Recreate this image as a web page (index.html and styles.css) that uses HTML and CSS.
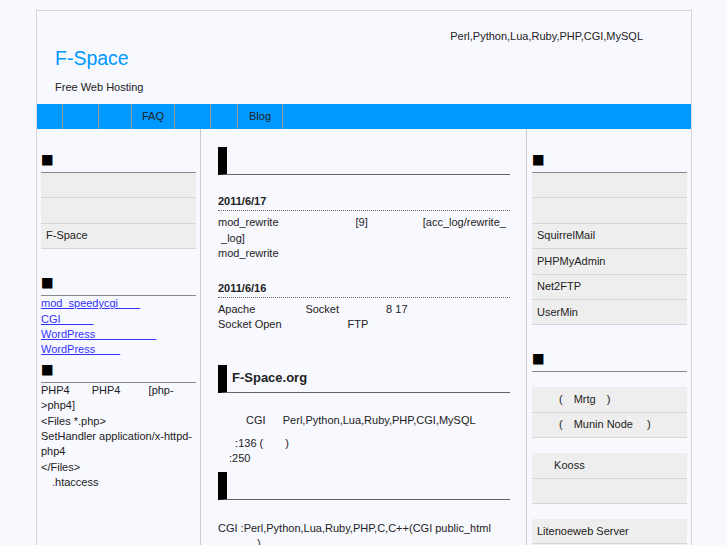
FILE: index.html
```html
<!DOCTYPE html>
<html lang="ja">
<head>
<meta charset="utf-8">
<title>F-Space</title>
<link rel="stylesheet" href="styles.css">
</head>
<body>
<div class="page">
  <header class="site-header">
    <div class="brand">
      <h1 class="site-title">F-Space</h1>
      <p class="site-desc">Free Web Hosting</p>
    </div>
    <p class="header-note">Perl,Python,Lua,Ruby,PHP,CGI,MySQL</p>
  </header>

  <ul class="global-nav">
    <li class="nav-w26"><a href="#">　</a></li>
    <li class="nav-w36"><a href="#">　</a></li>
    <li class="nav-w33"><a href="#">　</a></li>
    <li class="nav-w43"><a href="#">FAQ</a></li>
    <li class="nav-w36"><a href="#">　</a></li>
    <li class="nav-w27"><a href="#">　</a></li>
    <li class="nav-w45"><a href="#">Blog</a></li>
  </ul>

  <div class="columns">
    <aside class="sidebar sidebar-left">
      <h3 class="side-title"><span class="mark">■</span>　</h3>
      <ul class="menu">
        <li>　</li>
        <li>　</li>
        <li>F-Space</li>
      </ul>

      <h3 class="side-title"><span class="mark">■</span>　</h3>
      <div class="link-list">
        <a href="#">mod_speedycgi　　</a><br>
        <a href="#">CGI　　　</a><br>
        <a href="#">WordPress　　　　　&nbsp;&nbsp;</a><br>
        <a href="#">WordPress　　&nbsp;</a>
      </div>

      <h3 class="side-title"><span class="mark">■</span>　</h3>
      <p class="note">PHP4　　PHP4　　&nbsp;&nbsp;[php-&gt;php4]<br>
      &lt;Files *.php&gt;<br>
      SetHandler application/x-httpd-php4<br>
      &lt;/Files&gt;<br>
      　.htaccess</p>
    </aside>

    <main class="main">
      <h2 class="entry-title">　</h2>
      <div class="news">
        <div class="news-item">
          <h4 class="news-date">2011/6/17</h4>
          <p class="news-body">mod_rewrite　　　　　　　[9]　　　　　[acc_log/rewrite_<br>&nbsp;_log]<br>mod_rewrite</p>
        </div>
        <div class="news-item">
          <h4 class="news-date">2011/6/16</h4>
          <p class="news-body">Apache　　　　&nbsp;&nbsp;Socket　　　　&nbsp;8 17<br>Socket Open　　　　　　FTP</p>
        </div>
      </div>

      <h2 class="entry-title">F-Space.org</h2>
      <div class="about">
        <p>　　&nbsp;&nbsp;CGI　&nbsp;&nbsp;Perl,Python,Lua,Ruby,PHP,CGI,MySQL</p>
        <p>　&nbsp;&nbsp;:136 (　　)<br>　:250</p>
      </div>

      <h2 class="entry-title">　</h2>
      <div class="about">
        <p>CGI&nbsp;:Perl,Python,Lua,Ruby,PHP,C,C++(CGI public_html<br>　　　&nbsp;&nbsp;)</p>
      </div>
    </main>

    <aside class="sidebar sidebar-right">
      <h3 class="side-title"><span class="mark">■</span>　</h3>
      <ul class="menu">
        <li>　</li>
        <li>　</li>
        <li>SquirrelMail</li>
        <li>PHPMyAdmin</li>
        <li>Net2FTP</li>
        <li>UserMin</li>
      </ul>

      <h3 class="side-title"><span class="mark">■</span>　</h3>
      <ul class="menu menu-group">
        <li>　　(　Mrtg　)</li>
        <li>　　(　Munin Node　&nbsp;)</li>
      </ul>
      <ul class="menu menu-group">
        <li>　&nbsp;&nbsp;Kooss</li>
        <li>　</li>
      </ul>
      <ul class="menu menu-group">
        <li>Litenoeweb Server</li>
        <li>　</li>
      </ul>
    </aside>
  </div>
</div>
</body>
</html>
```

FILE: styles.css
```css
* {
  box-sizing: border-box;
}

html {
  background: #f8f8ff;
}

body {
  margin: 0;
  font-family: "Liberation Sans", "Noto Sans CJK JP", Arial, sans-serif;
  font-size: 11px;
  line-height: 1.4;
  color: #222;
  background: #f8f8ff;
}

.page {
  width: 656px;
  margin: 10px 0 0 36px;
  border: 1px solid #d4d4d4;
  background: #f8f8ff;
}

/* header */
.site-header {
  display: flex;
  justify-content: space-between;
  height: 93px;
}

.brand {
  padding: 34.5px 0 0 18px;
}

.site-title {
  margin: 0;
  font-size: 19.5px;
  line-height: 24px;
  font-weight: normal;
  color: #0099ff;
}

.site-desc {
  margin: 10px 0 0;
  line-height: 14px;
}

.header-note {
  margin: 0;
  padding: 18px 48px 0 0;
  line-height: 14px;
}

/* navigation */
.global-nav {
  display: flex;
  height: 25px;
  margin: 0;
  padding: 0;
  list-style: none;
  background: #0099ff;
}

.global-nav li {
  border-right: 1px solid #999;
  text-align: center;
  line-height: 25px;
}

.global-nav a {
  display: block;
  color: #222;
  text-decoration: none;
}

.nav-w26 { width: 26px; }
.nav-w27 { width: 27px; }
.nav-w33 { width: 33px; }
.nav-w36 { width: 36px; }
.nav-w43 { width: 43px; }
.nav-w45 { width: 45px; }

/* columns */
.columns {
  display: grid;
  grid-template-columns: 163px 327px 164px;
}

.sidebar-left {
  padding: 19px 4px 0 4px;
}

.sidebar-right {
  padding: 19px 4px 0 5px;
}

.main {
  padding: 12px 16px 24px 17px;
  border-left: 1px solid #ccc;
  border-right: 1px solid #ccc;
}

/* sidebar */
.side-title {
  margin: 4px 0 0;
  padding-bottom: 4px;
  border-bottom: 1px solid #888;
  font-size: 11px;
  line-height: 16px;
  font-weight: normal;
}

.mark {
  font-family: "DejaVu Sans", sans-serif;
  font-size: 13.5px;
  line-height: 1;
  color: #000;
}

.menu {
  list-style: none;
  margin: 0 0 26px;
  padding: 0;
}

.menu li {
  padding: 4.5px 5px;
  line-height: 15.4px;
  background: #eee;
  border-bottom: 1px solid #d6d6d6;
}

.menu-group {
  margin: 15px 0 0;
}

.link-list a {
  color: #3333ff;
  text-decoration: underline;
}

.note {
  margin: 0;
}

/* main */
.entry-title {
  margin: 6px 0 0;
  padding: 2px 0 3px 5px;
  border-left: 9px solid #000;
  border-bottom: 1px solid #666;
  font-size: 13px;
  line-height: 22px;
  font-weight: bold;
}

.news {
  margin-bottom: 32px;
}

.news-item {
  margin-top: 19px;
}

.news-date {
  margin: 0;
  padding-bottom: 1px;
  border-bottom: 1px dotted #666;
  font-size: 11px;
  line-height: 15.4px;
  font-weight: bold;
}

.news-body {
  margin: 4px 0 0;
}

.about p {
  margin: 7px 0 0;
}

.about p:first-child {
  margin-top: 20.5px;
}
```
